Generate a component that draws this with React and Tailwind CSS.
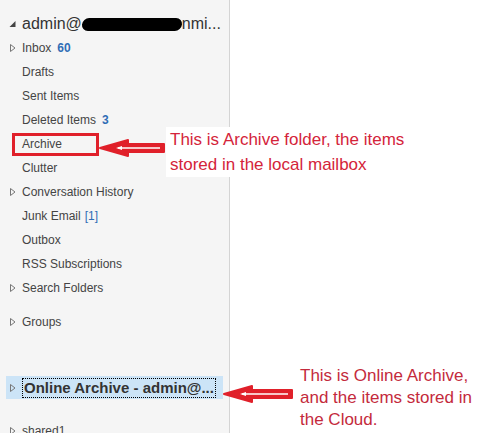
import React from 'react';

const Tri = ({ filled }) => (
  <svg width="8" height="10" viewBox="0 0 8 10" className="shrink-0">
    {filled ? (
      <path d="M6.5 2 L6.5 8 L0.5 8 Z" fill="#444" />
    ) : (
      <path d="M1.5 1.5 L6 5 L1.5 8.5 Z" fill="none" stroke="#777" strokeWidth="1" />
    )}
  </svg>
);

function Folder({ name, count, junk, expand }) {
  return (
    <div className="h-6 flex items-center pl-[9px]">
      <div className="w-[13px] flex items-center">{expand && <Tri />}</div>
      <span className="text-[12px] text-[#444]">{name}</span>
      {count && <span className="ml-[6px] text-[12px] font-bold text-[#2f6db5]">{count}</span>}
      {junk && <span className="ml-[4px] text-[12px] text-[#2f6db5]">[1]</span>}
    </div>
  );
}

function Arrow({ width }) {
  return (
    <svg width={width} height="20" viewBox={`0 0 ${width} 20`}>
      <path
        d={`M2 10 L30 2 L30 6 L${width - 2} 6 L${width - 2} 14 L30 14 L30 18 Z`}
        fill="#e0202a"
        stroke="#e0202a"
        strokeWidth="2"
        strokeLinejoin="round"
      />
      <line x1="20" y1="10" x2={width - 6} y2="10" stroke="#fff" strokeWidth="1.3" />
      <path d="M18 10 L24 8 L24 12 Z" fill="#fff" />
    </svg>
  );
}

export default function App() {
  return (
    <div className="relative w-[501px] h-[433px] overflow-hidden bg-white flex" style={{ fontFamily: '"Liberation Sans", Arial, sans-serif' }}>
      {/* folder pane */}
      <div className="w-[230px] h-full bg-[#f5f5f5] border-r border-[#d4d4d4] pt-[12px]">
        <div className="h-6 flex items-center pl-[9px]">
          <div className="w-[13px] flex items-center"><Tri filled /></div>
          <span className="text-[16px] text-[#333] flex items-center">
            admin@
            <span className="inline-block w-[100px] h-[13px] bg-black rounded-full -skew-x-6" />
            nmi...
          </span>
        </div>
        <Folder name="Inbox" count="60" expand />
        <Folder name="Drafts" />
        <Folder name="Sent Items" />
        <Folder name="Deleted Items" count="3" />
        <Folder name="Archive" />
        <Folder name="Clutter" />
        <Folder name="Conversation History" expand />
        <Folder name="Junk Email" junk />
        <Folder name="Outbox" />
        <Folder name="RSS Subscriptions" />
        <Folder name="Search Folders" expand />
        <div className="h-[10px]" />
        <Folder name="Groups" expand />
        <div className="h-[42px]" />
        <div className="h-[23px] mx-[6px] bg-[#cce4f7] flex items-center pl-[3px]">
          <div className="w-[13px] flex items-center"><Tri /></div>
          <span className="text-[15px] font-bold text-[#333] border border-dotted border-black px-[1px] leading-[18px]">
            Online Archive - admin@...
          </span>
        </div>
        <div className="h-[20px]" />
        <Folder name="shared1" expand />
      </div>

      {/* Archive highlight box + annotation */}
      <div className="absolute left-[12px] top-[133px] w-[87px] h-[23px] border-[3px] border-[#e0202a]" />
      <div className="absolute left-[98px] top-[138px]">
        <Arrow width={68} />
      </div>
      <div className="absolute left-[166px] top-[127px] bg-white px-[4px] text-[17px] leading-[25px] text-[#d4243a]">
        <div>This is Archive folder, the items</div>
        <div>stored in the local mailbox</div>
      </div>

      {/* Online archive annotation */}
      <div className="absolute left-[222px] top-[384px]">
        <Arrow width={72} />
      </div>
      <div className="absolute left-[300px] top-[365px] text-[17px] leading-[22px] text-[#c42a3c]">
        <div>This is Online Archive,</div>
        <div>and the items stored in</div>
        <div>the Cloud.</div>
      </div>
    </div>
  );
}
